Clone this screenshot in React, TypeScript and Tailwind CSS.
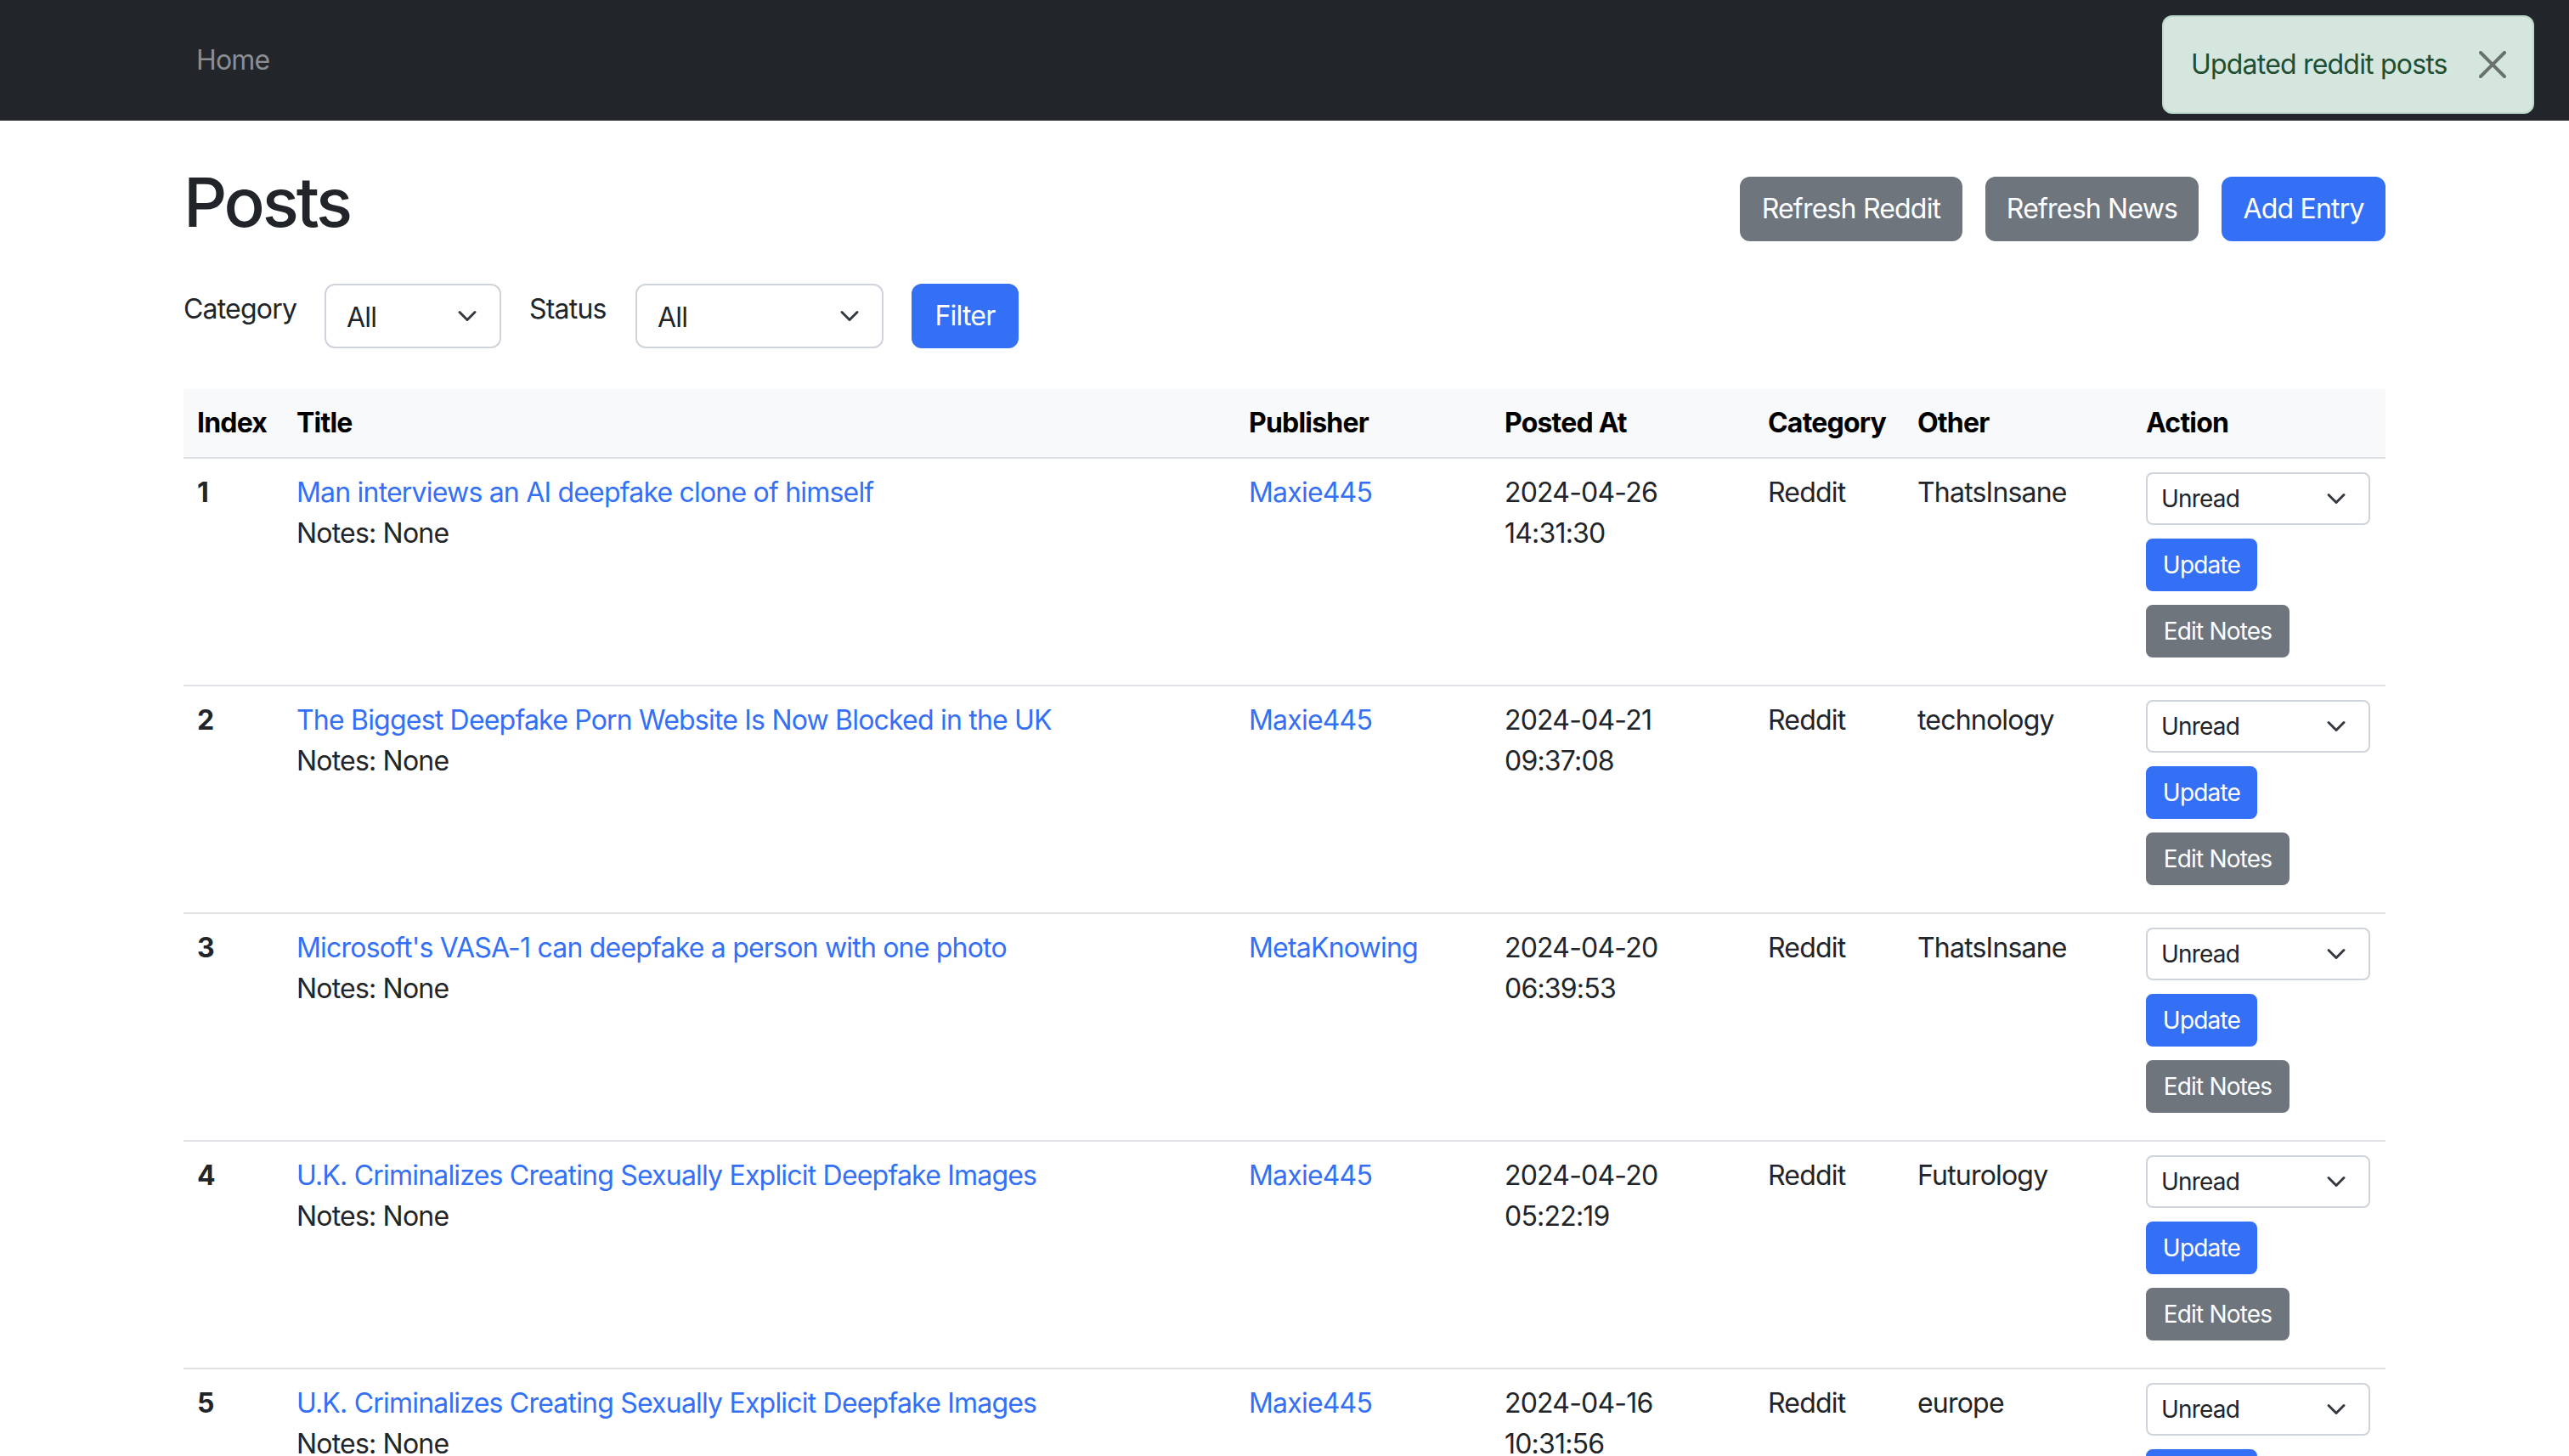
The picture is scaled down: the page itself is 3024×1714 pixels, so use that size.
import React from "react";

type Post = {
  id: number;
  title: string;
  publisher: string;
  date: string;
  time: string;
  category: string;
  other: string;
};

const posts: Post[] = [
  {
    id: 1,
    title: "Man interviews an AI deepfake clone of himself",
    publisher: "Maxie445",
    date: "2024-04-26",
    time: "14:31:30",
    category: "Reddit",
    other: "ThatsInsane",
  },
  {
    id: 2,
    title: "The Biggest Deepfake Porn Website Is Now Blocked in the UK",
    publisher: "Maxie445",
    date: "2024-04-21",
    time: "09:37:08",
    category: "Reddit",
    other: "technology",
  },
  {
    id: 3,
    title: "Microsoft's VASA-1 can deepfake a person with one photo",
    publisher: "MetaKnowing",
    date: "2024-04-20",
    time: "06:39:53",
    category: "Reddit",
    other: "ThatsInsane",
  },
  {
    id: 4,
    title: "U.K. Criminalizes Creating Sexually Explicit Deepfake Images",
    publisher: "Maxie445",
    date: "2024-04-20",
    time: "05:22:19",
    category: "Reddit",
    other: "Futurology",
  },
  {
    id: 5,
    title: "U.K. Criminalizes Creating Sexually Explicit Deepfake Images",
    publisher: "Maxie445",
    date: "2024-04-16",
    time: "10:31:56",
    category: "Reddit",
    other: "europe",
  },
];

function Chevron() {
  return (
    <svg width="24" height="24" viewBox="0 0 16 16" className="shrink-0">
      <path
        d="m2 5 6 6 6-6"
        fill="none"
        stroke="#343a40"
        strokeWidth="2"
        strokeLinecap="round"
        strokeLinejoin="round"
      />
    </svg>
  );
}

function CloseIcon() {
  return (
    <svg width="32" height="32" viewBox="0 0 16 16" className="opacity-50">
      <path
        d="M.293.293a1 1 0 0 1 1.414 0L8 6.586 14.293.293a1 1 0 1 1 1.414 1.414L9.414 8l6.293 6.293a1 1 0 0 1-1.414 1.414L8 9.414l-6.293 6.293a1 1 0 0 1-1.414-1.414L6.586 8 .293 1.707a1 1 0 0 1 0-1.414"
        fill="#000"
      />
    </svg>
  );
}

function PostRow({ post }: { post: Post }) {
  return (
    <tr className="border-b-2 border-[#dee2e6]">
      <td className="p-[16px] align-top font-bold">{post.id}</td>
      <td className="p-[16px] align-top">
        <a className="text-[#3470f5] no-underline">{post.title}</a>
        <div>Notes: None</div>
      </td>
      <td className="p-[16px] align-top">
        <a className="text-[#3470f5]">{post.publisher}</a>
      </td>
      <td className="p-[16px] align-top">
        <div>{post.date}</div>
        <div>{post.time}</div>
      </td>
      <td className="p-[16px] align-top">{post.category}</td>
      <td className="p-[16px] align-top">{post.other}</td>
      <td className="p-[16px] align-top">
        <div className="flex flex-col items-start pb-[16px]">
          <div className="flex h-[62px] w-[264px] items-center justify-between rounded-[8px] border-2 border-[#ced4da] pl-[16px] pr-[26px] text-[28px] leading-[42px]">
            <span>Unread</span>
            <Chevron />
          </div>
          <button className="mt-[16px] h-[62px] w-[131px] rounded-[8px] border-2 border-[#3470f5] bg-[#3470f5] text-[28px] leading-[42px] text-white">
            Update
          </button>
          <button className="mt-[16px] h-[62px] w-[169px] rounded-[8px] border-2 border-[#6f757d] bg-[#6f757d] text-[28px] leading-[42px] text-white">
            Edit Notes
          </button>
        </div>
      </td>
    </tr>
  );
}

export default function App() {
  return (
    <div className="min-h-screen bg-white font-[Inter,'Liberation_Sans',sans-serif] text-[32px] leading-[48px] tracking-[-0.025em] text-[#212529]">
      {/* navbar */}
      <nav className="relative flex h-[142px] items-center bg-[#22262a]">
        <div className="mx-auto w-[2592px]">
          <span className="pl-[15px] text-[#8b8e92]">Home</span>
        </div>
        <div className="absolute right-[41px] top-[18px] flex h-[116px] w-[438px] items-center justify-between rounded-[12px] border-2 border-[#bcd9ca] bg-[#d4e6dd] pl-[32px] pr-[31px] text-[#1f4f33]">
          <span>Updated reddit posts</span>
          <CloseIcon />
        </div>
      </nav>

      <main className="mx-auto w-[2592px]">
        <div className="mt-[48px] flex items-center justify-between">
          <h1 className="mb-[16px] text-[80px] font-medium leading-[96px] tracking-[-0.04em]">Posts</h1>
          <div className="flex gap-[27px]">
            <button className="h-[76px] w-[262px] rounded-[12px] border-2 border-[#6f757d] bg-[#6f757d] text-white">
              Refresh Reddit
            </button>
            <button className="h-[76px] w-[251px] rounded-[12px] border-2 border-[#6f757d] bg-[#6f757d] text-white">
              Refresh News
            </button>
            <button className="h-[76px] w-[193px] rounded-[12px] border-2 border-[#3470f5] bg-[#3470f5] text-white">
              Add Entry
            </button>
          </div>
        </div>

        {/* filters */}
        <div className="mt-[32px] flex items-center">
          <label className="mb-[16px] w-[166px]">Category</label>
          <div className="flex h-[76px] w-[208px] items-center justify-between rounded-[12px] border-2 border-[#ced4da] pl-[24px] pr-[26px]">
            <span className="pt-[4px]">All</span>
            <Chevron />
          </div>
          <label className="mb-[16px] ml-[33px] w-[125px]">Status</label>
          <div className="flex h-[76px] w-[292px] items-center justify-between rounded-[12px] border-2 border-[#ced4da] pl-[24px] pr-[26px]">
            <span className="pt-[4px]">All</span>
            <Chevron />
          </div>
          <button className="ml-[33px] h-[76px] w-[126px] rounded-[12px] border-2 border-[#3470f5] bg-[#3470f5] text-white">
            Filter
          </button>
        </div>

        {/* posts table */}
        <table className="mt-[48px] w-full table-fixed border-collapse">
          <colgroup>
            <col className="w-[117px]" />
            <col className="w-[1121px]" />
            <col className="w-[301px]" />
            <col className="w-[310px]" />
            <col className="w-[176px]" />
            <col className="w-[269px]" />
            <col className="w-[298px]" />
          </colgroup>
          <thead>
            <tr className="border-b-2 border-[#dee2e6] bg-[#f8f9fa] text-left text-black">
              <th className="p-[16px] font-bold">Index</th>
              <th className="p-[16px] font-bold">Title</th>
              <th className="p-[16px] font-bold">Publisher</th>
              <th className="p-[16px] font-bold">Posted At</th>
              <th className="p-[16px] font-bold">Category</th>
              <th className="p-[16px] font-bold">Other</th>
              <th className="p-[16px] font-bold">Action</th>
            </tr>
          </thead>
          <tbody>
            {posts.map((post) => (
              <PostRow key={post.id} post={post} />
            ))}
          </tbody>
        </table>
      </main>
    </div>
  );
}
